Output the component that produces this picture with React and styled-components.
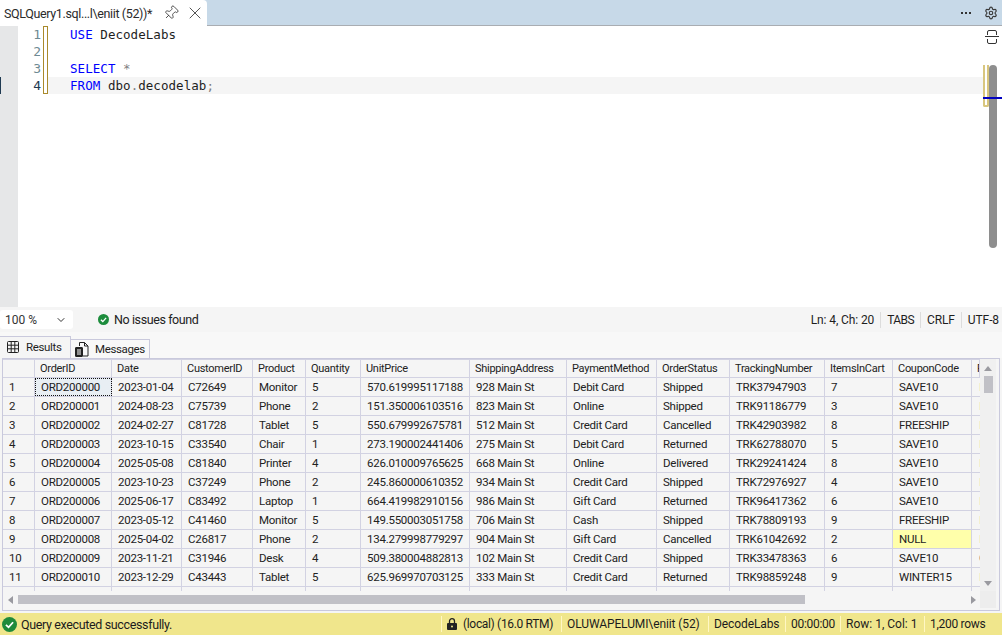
import React from "react";
import styled, { createGlobalStyle } from "styled-components";
import { Pin, X, Settings, ChevronDown } from "lucide-react";

const columns = [
  "OrderID", "Date", "CustomerID", "Product", "Quantity", "UnitPrice", "ShippingAddress",
  "PaymentMethod", "OrderStatus", "TrackingNumber", "ItemsInCart", "CouponCode", "PaymentRef",
];

const rows = [
  ["ORD200000", "2023-01-04", "C72649", "Monitor", "5", "570.619995117188", "928 Main St", "Debit Card", "Shipped", "TRK37947903", "7", "SAVE10", "NULL"],
  ["ORD200001", "2024-08-23", "C75739", "Phone", "2", "151.350006103516", "823 Main St", "Online", "Shipped", "TRK91186779", "3", "SAVE10", "NULL"],
  ["ORD200002", "2024-02-27", "C81728", "Tablet", "5", "550.679992675781", "512 Main St", "Credit Card", "Cancelled", "TRK42903982", "8", "FREESHIP", "NULL"],
  ["ORD200003", "2023-10-15", "C33540", "Chair", "1", "273.190002441406", "275 Main St", "Debit Card", "Returned", "TRK62788070", "5", "SAVE10", "NULL"],
  ["ORD200004", "2025-05-08", "C81840", "Printer", "4", "626.010009765625", "668 Main St", "Online", "Delivered", "TRK29241424", "8", "SAVE10", "NULL"],
  ["ORD200005", "2023-10-23", "C37249", "Phone", "2", "245.860000610352", "934 Main St", "Credit Card", "Shipped", "TRK72976927", "4", "SAVE10", "NULL"],
  ["ORD200006", "2025-06-17", "C83492", "Laptop", "1", "664.419982910156", "986 Main St", "Gift Card", "Returned", "TRK96417362", "6", "SAVE10", "NULL"],
  ["ORD200007", "2023-05-12", "C41460", "Monitor", "5", "149.550003051758", "706 Main St", "Cash", "Shipped", "TRK78809193", "9", "FREESHIP", "NULL"],
  ["ORD200008", "2025-04-02", "C26817", "Phone", "2", "134.279998779297", "904 Main St", "Gift Card", "Cancelled", "TRK61042692", "2", "NULL", "NULL"],
  ["ORD200009", "2023-11-21", "C31946", "Desk", "4", "509.380004882813", "102 Main St", "Credit Card", "Shipped", "TRK33478363", "6", "SAVE10", "Gift"],
  ["ORD200010", "2023-12-29", "C43443", "Tablet", "5", "625.969970703125", "333 Main St", "Credit Card", "Returned", "TRK98859248", "9", "WINTER15", "NULL"],
  ["", "", "", "", "", "", "", "", "", "", "", "", ""],
];

const GRID_COLS = "32px 77px 70px 71px 53px 55px 109px 97px 90px 73px 95px 68px 79px 1fr";
const UI_FONT = `Roboto, "Noto Sans", "Liberation Sans", sans-serif`;

const GlobalStyle = createGlobalStyle`
  html, body {
    margin: 0;
    padding: 0;
    background: #f5f5f5;
    overflow: hidden;
  }
`;

const Window = styled.div`
  width: 1002px;
  height: 635px;
  display: flex;
  flex-direction: column;
  overflow: hidden;
  background: #f5f5f5;
  font-family: ${UI_FONT};
  color: #1e1e1e;
`;

const TabBar = styled.div`
  height: 25px;
  flex: none;
  display: flex;
  align-items: stretch;
  justify-content: space-between;
  background: #c7d9e8;
  border-bottom: 1px solid #a9adb2;
`;

const DocTab = styled.div`
  width: 207px;
  height: 26px;
  display: flex;
  align-items: center;
  background: #fff;
  border-radius: 0 4px 0 0;
  padding-left: 4px;
  box-sizing: border-box;
  font-size: 12.5px;
  letter-spacing: -0.36px;
  color: #2b2b2b;
  position: relative;
  z-index: 1;
`;

const DocTitle = styled.span`
  width: 159px;
  white-space: nowrap;
`;

const TabIcons = styled.div`
  display: flex;
  align-items: center;
  gap: 6px;
  color: #333;
`;

const BarTools = styled.div`
  display: flex;
  align-items: center;
  gap: 13px;
  padding-right: 4px;
  color: #3a3a3a;
`;

const Dots = styled.span`
  display: flex;
  gap: 2px;
  i {
    width: 2px;
    height: 2px;
    background: #333;
  }
`;

const Editor = styled.div`
  height: 281px;
  flex: none;
  display: flex;
  background: #fff;
`;

const Margin = styled.div`
  width: 18px;
  flex: none;
  background: #e6e7e8;
  position: relative;
`;

const Caret = styled.div`
  position: absolute;
  left: 0;
  top: 51px;
  width: 1px;
  height: 17px;
  background: #1f3a52;
`;

const LineNumbers = styled.div`
  width: 25px;
  flex: none;
  box-sizing: border-box;
  padding-right: 2px;
  text-align: right;
  font: 13px/17px "DejaVu Sans Mono", monospace;
  background: #fff;
`;

const LineNumber = styled.div`
  height: 17px;
  color: ${(p) => (p.$current ? "#1f3a52" : "#6e8a92")};
`;

const ChangeBar = styled.div`
  width: 5px;
  height: 68px;
  flex: none;
  box-sizing: border-box;
  border: 1px solid #a98a2c;
  background: #fff;
`;

const Code = styled.div`
  flex: 1;
  padding-left: 22px;
  font: 12.5px/17px "DejaVu Sans Mono", monospace;
  letter-spacing: 0.05px;
  color: #1e1e1e;
`;

const CodeLine = styled.div`
  height: 17px;
  white-space: pre;
  margin-left: -22px;
  padding-left: 22px;
  background: ${(p) => (p.$current ? "#f5f5f5" : "transparent")};
`;

const Keyword = styled.span`
  color: #0000ff;
`;

const Punct = styled.span`
  color: #808080;
`;

const Rail = styled.div`
  width: 19px;
  flex: none;
  position: relative;
  background: #fff;
`;

const SplitIcon = styled.svg`
  position: absolute;
  left: 2px;
  top: 4px;
`;

const Marker = styled.div`
  position: absolute;
  left: 0;
  top: 39px;
  width: 6px;
  height: 42px;
  box-sizing: border-box;
  border: 2px solid #d8c67f;
  border-top: none;
  border-radius: 0 0 2px 2px;
  background: #fff;
`;

const EditorThumb = styled.div`
  position: absolute;
  left: 6px;
  top: 39px;
  width: 8px;
  height: 183px;
  border-radius: 4px;
  background: #8e8e8e;
`;

const CaretMark = styled.div`
  position: absolute;
  left: 0;
  right: 0;
  top: 71px;
  height: 2px;
  background: #0000c0;
`;

const EditorStatus = styled.div`
  height: 25px;
  flex: none;
  display: flex;
  align-items: center;
  font-size: 12px;
  background: #f5f5f5;
`;

const ZoomBox = styled.div`
  width: 73px;
  height: 19px;
  box-sizing: border-box;
  display: flex;
  align-items: center;
  justify-content: space-between;
  padding: 0 6px 0 5px;
  background: #fff;
  border-radius: 3px;
  color: #333;
`;

const IssueLabel = styled.div`
  display: flex;
  align-items: center;
  gap: 5px;
  margin-left: 25px;
  font-size: 12.5px;
  letter-spacing: -0.4px;
  color: #222;
`;

const EditorInfo = styled.div`
  margin-left: auto;
  display: flex;
  align-items: center;
`;

const InfoItem = styled.span`
  padding: 1px 6px;
  border-left: ${(p) => (p.$first ? "none" : "1px solid #dcdcdc")};
  white-space: nowrap;
  letter-spacing: ${(p) => p.$ls || -0.1}px;
  &:last-child {
    padding-right: 3px;
  }
`;

const ResultTabs = styled.div`
  height: 26px;
  flex: none;
  display: flex;
  align-items: flex-end;
  font-size: 11.5px;
  letter-spacing: -0.35px;
  color: #1e1e1e;
  background: #f8f8f8;
`;

const ResultTab = styled.div`
  height: ${(p) => (p.$active ? "22px" : "19px")};
  box-sizing: border-box;
  width: ${(p) => (p.$active ? "71px" : "80px")};
  margin-left: ${(p) => (p.$active ? "0" : "-1px")};
  display: flex;
  align-items: center;
  gap: ${(p) => (p.$active ? "7px" : "6px")};
  padding: ${(p) => (p.$active ? "0 0 2px 7px" : "0 0 0 4px")};
  background: ${(p) => (p.$active ? "#f5f5f5" : "#f8f8f8")};
  border: 1px solid #c9c9dc;
  border-left: ${(p) => (p.$active ? "none" : "1px solid #c9c9dc")};
  border-bottom: none;
`;

const GridPanel = styled.div`
  height: 253px;
  flex: none;
  margin: 0 2px;
  box-sizing: border-box;
  border: 1px solid #c9c9dc;
  background: #f5f5f5;
  display: flex;
  flex-direction: column;
  padding-bottom: 2px;
`;

const GridBody = styled.div`
  height: 232px;
  flex: none;
  display: flex;
  overflow: hidden;
`;

const Viewport = styled.div`
  width: 977px;
  flex: none;
  overflow: hidden;
  font-size: 11.5px;
  letter-spacing: -0.25px;
`;

const Row = styled.div`
  height: 19px;
  display: grid;
  grid-template-columns: ${GRID_COLS};
  box-sizing: border-box;
  border-bottom: 1px solid #d2d2e2;
`;

const HeaderCell = styled.div`
  padding-left: 5px;
  line-height: 17px;
  font-size: 11px;
  letter-spacing: -0.28px;
  border-right: 1px solid #d2d2e2;
  border-top: 1px solid #d2d2e2;
  white-space: nowrap;
  overflow: hidden;
  color: #222;
`;

const RowHeader = styled.div`
  padding-left: 6px;
  line-height: 18px;
  border-right: 1px solid #d2d2e2;
  color: #222;
`;

const Cell = styled.div`
  padding-left: 6px;
  line-height: 18px;
  box-sizing: border-box;
  border-right: 1px solid #d2d2e2;
  white-space: nowrap;
  overflow: hidden;
  color: #222;
  background: ${(p) => (p.$null ? "#ffffaa" : p.$focus ? "#e8eef3" : "transparent")};
  outline: ${(p) => (p.$focus ? "1px dotted #111" : "none")};
  outline-offset: -1px;
`;

const EdgeCell = styled(Cell)`
  padding-left: 7px;
  border-right: none;
  color: ${(p) => (p.$tan ? "#f0d9a0" : "#33406a")};
`;

const VScroll = styled.div`
  width: 16px;
  flex: none;
  position: relative;
  background: #f0f0f0;
`;

const VThumb = styled.div`
  position: absolute;
  left: 4px;
  top: 17px;
  width: 9px;
  height: 17px;
  background: #c0c0c6;
`;

const ArrowUp = styled.div`
  position: absolute;
  left: 4px;
  top: 7px;
  border: 4.5px solid transparent;
  border-top: none;
  border-bottom: 5px solid #9a9aa0;
`;

const ArrowDown = styled.div`
  position: absolute;
  left: 4px;
  bottom: 5px;
  border: 4.5px solid transparent;
  border-bottom: none;
  border-top: 5px solid #9a9aa0;
`;

const HScroll = styled.div`
  height: 17px;
  flex: none;
  display: flex;
  align-items: center;
`;

const HTrack = styled.div`
  width: 977px;
  flex: none;
  display: flex;
  align-items: center;
  padding: 0 4px 0 5px;
  box-sizing: border-box;
`;

const ArrowLeft = styled.div`
  border: 4.5px solid transparent;
  border-left: none;
  border-right: 5px solid #9a9aa0;
`;

const ArrowRight = styled.div`
  margin-left: auto;
  border: 4.5px solid transparent;
  border-right: none;
  border-left: 5px solid #9a9aa0;
`;

const HThumb = styled.div`
  margin-left: 5px;
  width: 787px;
  height: 9px;
  background: #c0c0c6;
`;

const Corner = styled.div`
  width: 16px;
  height: 17px;
  flex: none;
  background: #ededed;
`;

const StatusBar = styled.div`
  margin-top: auto;
  height: 22px;
  flex: none;
  display: flex;
  align-items: center;
  background: #f0e68c;
  font-size: 12px;
  color: #1c1c1c;
  padding-left: 2px;
`;

const StatusMessage = styled.div`
  display: flex;
  align-items: center;
  gap: 4px;
  font-size: 12.5px;
  letter-spacing: -0.36px;
  margin-right: auto;
`;

const StatusItem = styled.span`
  width: ${(p) => p.$w}px;
  box-sizing: border-box;
  display: flex;
  align-items: center;
  gap: 6px;
  padding: 1px 0 1px 5px;
  border-left: 1px solid #fff7c4;
  white-space: nowrap;
  letter-spacing: ${(p) => p.$ls || 0}px;
`;

const CheckIcon = ({ size, fill }) => (
  <svg width={size} height={size} viewBox="0 0 16 16">
    <circle cx="8" cy="8" r="8" fill={fill} />
    <path d="M4.2 8.3 7 11l4.8-5.4" fill="none" stroke="#fff" strokeWidth="1.9" />
  </svg>
);

const GridIcon = () => (
  <svg width="12" height="12" viewBox="0 0 12 12" fill="none" stroke="#222" strokeWidth="1">
    <rect x="0.5" y="0.5" width="11" height="11" rx="1" />
    <path d="M4.2 0.5v11M7.8 0.5v11M0.5 4.2h11M0.5 7.8h11" />
  </svg>
);

const MessagesIcon = () => (
  <svg width="14" height="15" viewBox="0 0 14 15" fill="none" stroke="#222" strokeWidth="1">
    <path d="M4.5 4V0.5h5l3.5 3.5v10H8" />
    <path d="M9.5 0.5V4H13" />
    <rect x="0.5" y="5.5" width="7" height="9" rx="0.5" fill="#222" />
    <path d="M2 8h4M2 10h4M2 12h4" stroke="#fff" />
  </svg>
);

const LockIcon = () => (
  <svg width="10" height="12" viewBox="0 0 10 12">
    <path d="M2.5 5V3.2a2.5 2.5 0 0 1 5 0V5" fill="none" stroke="#222" strokeWidth="1.3" />
    <rect x="0" y="5" width="10" height="7" rx="1" fill="#222" />
    <circle cx="5" cy="8.5" r="1" fill="#f0e68c" />
  </svg>
);

const App = () => {
  return (
    <>
      <GlobalStyle />
      <Window>
        <TabBar>
          <DocTab>
            <DocTitle>SQLQuery1.sql...l\eniit (52))*</DocTitle>
            <TabIcons>
              <Pin size={16} strokeWidth={1.2} style={{ transform: "rotate(45deg)" }} />
              <X size={20} strokeWidth={1} />
            </TabIcons>
          </DocTab>
          <BarTools>
            <Dots><i /><i /><i /></Dots>
            <Settings size={14} />
          </BarTools>
        </TabBar>

        <Editor>
          <Margin><Caret /></Margin>
          <LineNumbers>
            <LineNumber>1</LineNumber>
            <LineNumber>2</LineNumber>
            <LineNumber>3</LineNumber>
            <LineNumber $current>4</LineNumber>
          </LineNumbers>
          <ChangeBar />
          <Code>
            <CodeLine><Keyword>USE</Keyword> DecodeLabs</CodeLine>
            <CodeLine> </CodeLine>
            <CodeLine><Keyword>SELECT</Keyword> <Punct>*</Punct></CodeLine>
            <CodeLine $current><Keyword>FROM</Keyword> dbo<Punct>.</Punct>decodelab<Punct>;</Punct></CodeLine>
          </Code>
          <Rail>
            <SplitIcon width="14" height="14" viewBox="0 0 14 14" fill="none" stroke="#333">
              <path d="M2.5 5V2a1.5 1.5 0 0 1 1.5-1.5h6A1.5 1.5 0 0 1 11.5 2v3M0 6.5h14M2.5 9v3a1.5 1.5 0 0 0 1.5 1.5h6a1.5 1.5 0 0 0 1.5-1.5V9" />
            </SplitIcon>
            <Marker />
            <EditorThumb />
            <CaretMark />
          </Rail>
        </Editor>

        <EditorStatus>
          <ZoomBox>100 %<ChevronDown size={12} /></ZoomBox>
          <IssueLabel><CheckIcon size={11} fill="#1c8c3c" />No issues found</IssueLabel>
          <EditorInfo>
            <InfoItem $first>Ln: 4, Ch: 20</InfoItem>
            <InfoItem $ls={-0.6}>TABS</InfoItem>
            <InfoItem>CRLF</InfoItem>
            <InfoItem>UTF-8</InfoItem>
          </EditorInfo>
        </EditorStatus>

        <ResultTabs>
          <ResultTab $active><GridIcon />Results</ResultTab>
          <ResultTab><MessagesIcon />Messages</ResultTab>
        </ResultTabs>

        <GridPanel>
          <GridBody>
            <Viewport>
              <Row>
                <HeaderCell />
                {columns.map((c) => <HeaderCell key={c}>{c}</HeaderCell>)}
              </Row>
              {rows.map((r, i) => (
                <Row key={i}>
                  <RowHeader>{r[0] ? i + 1 : ""}</RowHeader>
                  {r.slice(0, 12).map((v, j) => (
                    <Cell key={j} $null={v === "NULL"} $focus={i === 0 && j === 0}>{v}</Cell>
                  ))}
                  <EdgeCell $tan={r[12] === "NULL"}>{r[12]}</EdgeCell>
                </Row>
              ))}
            </Viewport>
            <VScroll>
              <ArrowUp />
              <VThumb />
              <ArrowDown />
            </VScroll>
          </GridBody>
          <HScroll>
            <HTrack>
              <ArrowLeft />
              <HThumb />
              <ArrowRight />
            </HTrack>
            <Corner />
          </HScroll>
        </GridPanel>

        <StatusBar>
          <StatusMessage><CheckIcon size={15} fill="#1f8a3b" />Query executed successfully.</StatusMessage>
          <StatusItem $w={120} $ls={-0.33}><LockIcon />(local) (16.0 RTM)</StatusItem>
          <StatusItem $w={147} $ls={-0.1}>OLUWAPELUMI\eniit (52)</StatusItem>
          <StatusItem $w={77} $ls={-0.1}>DecodeLabs</StatusItem>
          <StatusItem $w={55} $ls={-0.3}>00:00:00</StatusItem>
          <StatusItem $w={84}>Row: 1, Col: 1</StatusItem>
          <StatusItem $w={78} $ls={-0.3}>1,200 rows</StatusItem>
        </StatusBar>
      </Window>
    </>
  );
};

export default App;
